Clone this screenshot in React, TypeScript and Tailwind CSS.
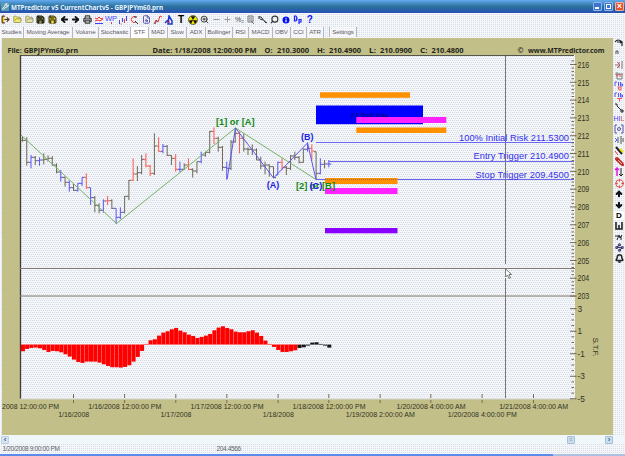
import type { ReactNode } from 'react';
import {
  LogOut, FolderOpen, Save, ArrowLeft, ArrowRight, Printer, Info, Minus, Plus,
  Search, ZoomIn, ArrowUp, ArrowDown, Bell, Crosshair, Pencil, Wrench, Waypoints, FileSearch,
} from 'lucide-react';

const DITHER = 'bg-[#f3f6fa] bg-[conic-gradient(#dadee3_25%,#f3f6fa_0)] bg-[length:2px_2px]';

// [high, low, close, colour] in thirds of a pixel below y = 110
type Bar = [number, number, number, string];
const BARS: Bar[] = [
  [78, 95, 91, 'k'], [82, 167, 157, 'k'], [135, 175, 142, 'b'], [138, 165, 152, 'k'], [142, 167, 150, 'b'],
  [130, 163, 148, 'k'], [136, 155, 145, 'k'], [138, 167, 165, 'k'], [160, 190, 186, 'k'], [180, 215, 202, 'b'],
  [200, 230, 217, 'k'], [212, 245, 233, 'b'], [222, 243, 241, 'k'], [220, 245, 220, 'b'], [202, 228, 202, 'b'],
  [190, 237, 233, 'r'], [233, 285, 263, 'b'], [258, 307, 286, 'k'], [280, 310, 301, 'k'], [268, 308, 273, 'b'],
  [258, 285, 272, 'r'], [268, 297, 295, 'k'], [295, 342, 322, 'b'], [292, 327, 307, 'b'], [258, 310, 259, 'k'],
  [210, 270, 211, 'k'], [145, 213, 192, 'r'], [168, 213, 188, 'k'], [135, 193, 148, 'k'], [130, 172, 168, 'r'],
  [165, 198, 190, 'r'], [70, 195, 108, 'k'], [82, 125, 124, 'r'], [102, 130, 109, 'b'], [105, 138, 136, 'k'],
  [136, 165, 145, 'k'], [132, 185, 178, 'r'], [155, 187, 178, 'b'], [160, 180, 165, 'k'], [145, 180, 178, 'r'],
  [175, 203, 183, 'k'], [155, 190, 155, 'k'], [125, 160, 135, 'b'], [126, 140, 127, 'k'], [63, 130, 64, 'k'],
  [52, 102, 85, 'r'], [80, 125, 112, 'k'], [108, 182, 172, 'k'], [155, 208, 175, 'b'], [90, 180, 96, 'k'],
  [53, 98, 70, 'k'], [65, 130, 85, 'r'], [70, 125, 117, 'k'], [112, 135, 118, 'k'], [103, 135, 120, 'k'],
  [115, 150, 150, 'k'], [140, 178, 168, 'k'], [155, 193, 165, 'k'], [163, 200, 170, 'k'], [170, 205, 203, 'k'],
  [155, 195, 157, 'b'], [145, 180, 172, 'r'], [168, 195, 175, 'k'], [135, 180, 138, 'k'], [125, 150, 142, 'k'],
  [138, 160, 157, 'k'], [115, 158, 118, 'k'], [97, 125, 115, 'b'], [103, 150, 123, 'r'], [125, 208, 190, 'k'],
  [145, 193, 163, 'b'], [150, 175, 162, 'k'], [150, 172, 162, 'b'],
];
const BAR_COLORS: Record<string, string> = { k: '#6e675a', b: '#5a55f5', r: '#fb5b50' };

const STF = [
  -20, -13, -10, -9, -11, -16, -22, -19, -20, -23, -29, -36, -45, -52, -55, -51, -51, -51, -54, -59, -64, -68, -68,
  -69, -67, -62, -51, -37, -19, 2, 13, 16, 27, 36, 40, 46, 50, 42, 37, 30, 26, 20, 23, 27, 32, 43, 51, 55, 50, 46,
  39, 37, 37, 40, 43, 36, 26, 12, 2, -7, -16, -22, -22, -20, -17, -10, -8, -3, 6, 7, 2, -3, -9,
];

const DATES: [string, number, number, number][] = [
  ['1/16/2008', 73.7, 417, 31], ['1/16/2008 12:00:00 PM', 124.8, 409, 73],
  ['1/17/2008', 176, 417, 31], ['1/17/2008 12:00:00 PM', 227, 409, 73],
  ['1/18/2008', 278.3, 417, 31], ['1/18/2008 12:00:00 PM', 329, 409, 73],
  ['1/19/2008 2:00:00 AM', 380.3, 417, 69], ['1/20/2008 4:00:00 AM', 431, 409, 69],
  ['1/20/2008 4:00:00 PM', 482.3, 417, 69], ['1/21/2008 4:00:00 AM', 533.7, 409, 69],
];

const ZONES: [number, number, number, number, string][] = [
  [320, 92.3, 90, 5.5, '#ff9000'],
  [316, 105.5, 107, 18.7, '#0000ff'],
  [356.3, 117, 90, 6, '#ff22ff'],
  [356.3, 127.5, 90, 5.5, '#ff9000'],
  [325, 178, 72.5, 6, '#ff9000'],
  [325, 188, 72.5, 6, '#ff22ff'],
  [325, 228, 72.5, 5.3, '#8800ff'],
];

const HEADINGS: [string, number, number][] = [
  ['File: GBPJPYm60.prn', 7.5, 70.5], ['Date: 1/18/2008 12:00:00 PM', 152.5, 104],
  ['O:', 264.5, 8], ['210.3000', 277, 32], ['H:', 317, 8], ['210.4900', 329, 32],
  ['L:', 369, 7], ['210.0900', 380, 32], ['C:', 420, 7.5], ['210.4800', 431.5, 32],
  ['©', 517.5, 6], ['www.MTPredictor.com', 528, 76.5],
];

const TABS: [string, number][] = [
  ['Studies', 24], ['Moving Average', 49], ['Volume', 26], ['Stochastic', 32], ['STF', 18], ['MAD', 19],
  ['Slow', 19], ['ADX', 19], ['Bollinger', 27], ['RSI', 16], ['MACD', 24], ['OBV', 18], ['CCI', 16], ['ATR', 17],
];

function Glyph({ children, color = '#222' }: { children: ReactNode; color?: string }) {
  return (
    <svg width="10" height="10" viewBox="0 0 10 10" fill="none" stroke={color} strokeWidth="1">
      {children}
    </svg>
  );
}

const TOOLS: ReactNode[] = [
  <LogOut size={9} strokeWidth={3} color="#5a3020" fill="#e8d820" />,
  <FolderOpen size={9} strokeWidth={2} color="#8a8440" fill="#f2ea70" />,
  <FolderOpen size={9} strokeWidth={2} color="#8a8850" fill="#e4e0a8" />,
  <Save size={9} strokeWidth={3.5} color="#24240c" fill="#8a8a60" />,
  <Save size={9} strokeWidth={3.5} color="#4a4515" fill="#ffe040" />,
  <ArrowLeft size={9} strokeWidth={5} color="#111" />,
  <ArrowRight size={9} strokeWidth={5} color="#111" />,
  <Printer size={9} strokeWidth={3} color="#444" fill="#aaa" />,
  <Glyph color="#f03030"><path d="M1 3l2 1 2-2 2 2 2-1M1 6l3-1 2 1 3-2" /><path d="M1 8.500h8" stroke="#4040ff" /></Glyph>,
  <span className="flex flex-col items-center text-[7.5px] leading-[7px] text-[#4444ff]">
    WP
    <span className="h-0.5 w-px bg-[#e04040]" />
  </span>,
  <Glyph color="#4444ee"><path d="M1.500 5v4M4.500 3v4M8.500 1v5" /><path d="M6.500 4v4M3 8.500v1" stroke="#f04040" /></Glyph>,
  <Glyph color="#f03030"><path d="M7 2a3 3 0 1 0 0 5" /><path d="M6 6l3 3M8 2H5" stroke="#333" /></Glyph>,
  <FileSearch size={9} strokeWidth={2.5} color="#574fb0" />,
  <Glyph color="#ee3030"><path d="M1 9l2-4 2 2 2-6 2 1" /><path d="M2 9l2-4" stroke="#555" /></Glyph>,
  <Glyph color="#1838d0"><path d="M1 8l3-3M5 1l3 5v3H4z" strokeWidth="1.500" /><path d="M3 7h3" stroke="#e02020" /></Glyph>,
  <span className="text-[10px] font-bold leading-[10px]">T</span>,
  <Glyph color="none">
    <circle cx="5" cy="5" r="4.500" fill="#f5e600" stroke="#222" strokeWidth=".6" />
    <path d="M5 5L2.700 1.200h4.600zM5 5L.8 5.500l2.200 3.600zM5 5l4.200.5L7 9.100z" fill="#111" />
  </Glyph>,
  <ZoomIn size={9} strokeWidth={2.5} color="#333" />,
  <Minus size={9} strokeWidth={2.5} color="#999" />,
  <Plus size={9} strokeWidth={2.5} color="#999" />,
  <span className="text-[7px] leading-[9px] text-[#444]">%₂</span>,
  <Glyph color="#777"><path d="M2 1h5v6H2zM3 3h3M3 5h3M5 6l3 3" /></Glyph>,
  <Glyph color="#333"><path d="M1 2h2l5 6M2 4l3 1M6 6l3 2M1 1v3" /></Glyph>,
  <Search size={9} strokeWidth={3} color="#333" className="-scale-x-100" />,
  <Info size={10} strokeWidth={3} color="#fff" fill="#0010ee" />,
  <Glyph color="#2020ff"><path d="M1.500 1v5H3q2-2.500 0-5zM6 9V4.500h2v2.500H6" strokeWidth="1.200" /></Glyph>,
  <span className="text-[10px] font-bold leading-[9px] text-[#1010ff]">?</span>,
];

const SIDE: ReactNode[] = [
  <Glyph><path d="M1 4q3-4 7 0l-2 1M3 4h5v4" strokeWidth="1.200" /></Glyph>,
  <Glyph color="#555"><path d="M2 5V2h2v3" /></Glyph>,
  <Glyph color="#777"><path d="M1 5h3M8 1v8M5 2v6" /><path d="M3 2l3 3-3 3" stroke="#f05050" /></Glyph>,
  <Glyph color="#777"><path d="M1 3h8M3 1v7h5V3" /><path d="M2 5l4-2v3" stroke="#e05050" /></Glyph>,
  <Glyph color="#5555ff"><path d="M1 5V1h2M4.500 1v4M6.500 1v4h2V3h-2" /><path d="M4 6h3v3H5z" stroke="#f05050" /></Glyph>,
  <Glyph color="#5555ff"><path d="M1 5V1h2M4.500 1v4M6.500 1v4h2V3h-2" /><path d="M3 6.500h5M5.500 6v3.500" stroke="#f05050" /></Glyph>,
  <Glyph><path d="M1 1h2v2l4 4h2v2H7V7" /></Glyph>,
  <span className="text-[7px] leading-[8px] text-[#4444ff]">HI<span className="text-[#f04040]">L</span></span>,
  <Glyph color="#5555aa"><path d="M3 1H1v8h2M7 1h2v8H7" /><circle cx="5" cy="5" r="1.500" /></Glyph>,
  <Glyph color="#555"><path d="M4 2v6M7 1v8M9 3v4" /><path d="M1 3l2 2-2 2" stroke="#5555ff" /></Glyph>,
  <Glyph color="#222"><path d="M2 1l6 7" strokeWidth="2" /><path d="M6 3l3 3" stroke="#eee000" strokeWidth="2" /><path d="M1 5l3 4" stroke="#f03030" /></Glyph>,
  <Pencil size={9} strokeWidth={4} color="#c02020" className="-scale-x-100" />,
  <Glyph color="#222"><path d="M7 1v8M5 7l2 2 2-2" /><path d="M3 9V1M1 3l2-2 2 2" stroke="#e020e0" strokeWidth="1.500" /></Glyph>,
  <Crosshair size={9} strokeWidth={2.5} color="#e04030" />,
  <ArrowUp size={8} strokeWidth={6} color="#111" />,
  <ArrowDown size={8} strokeWidth={6} color="#111" />,
  <span className="bg-white px-0.5 text-[8px] font-bold leading-[9px]">D</span>,
  <Glyph><path d="M2 1v7h6V1M5 4v4" strokeWidth="1.600" /></Glyph>,
  <Glyph><path d="M1 4h3M3 8l2-5 1 3 2-3M7 4v4" /></Glyph>,
  <Waypoints size={9} strokeWidth={3} color="#403a70" />,
  <Bell size={9} strokeWidth={4} color="#222" />,
];

function Axis() {
  const priceTicks = Array.from({ length: 67 }, (_, i) => 60.9 + i * 3.563);
  const stfTicks = Array.from({ length: 17 }, (_, i) => 308.7 + i * 5.63);
  return (
    <g fontSize="8.300" fill="#333323">
      {priceTicks.filter((y) => y < 297).map((y, i) => (
        <path key={i} d={`M${i % 5 === 1 ? 570 : 571.5} ${y}H${i % 5 === 1 ? 576.5 : 574}`} stroke="#66563c" strokeWidth=".9" />
      ))}
      {stfTicks.map((y, i) => (
        <path key={i} d={`M${i % 4 === 0 ? 570 : 571.5} ${y}H${i % 4 === 0 ? 576.5 : 574}`} stroke="#66563c" strokeWidth=".9" />
      ))}
      {Array.from({ length: 14 }, (_, i) => (
        <text key={i} x="577.5" y={67.7 + i * 17.8} textLength="11.8" lengthAdjust="spacingAndGlyphs">{216 - i}</text>
      ))}
      {[3, 1, -1, -3, -5].map((v, i) => (
        <text key={v} x="577.5" y={311.7 + i * 22.5}>{v}</text>
      ))}
      <text transform="translate(592.5 337.5) rotate(90)" fontSize="8" textLength="19">S.T.F.</text>
    </g>
  );
}

function Chart() {
  return (
    <svg className="block h-[397px] w-[611px] shrink-0" viewBox="2 38 611 397" fontFamily="Liberation Sans, Arial, sans-serif">
      <defs>
        <pattern id="dots" width="4" height="4" patternUnits="userSpaceOnUse">
          <rect width="4" height="4" fill="#f3f6fa" />
          <path d="M0 0h1v1h-1zM2 0h1v1h-1zM1 2h1v1h-1zM3 2h1v1h-1z" fill="#d6dade" />
        </pattern>
        <pattern id="specks" width="23" height="19" patternUnits="userSpaceOnUse">
          <rect width="23" height="19" fill="#c2bf89" />
          <path d="M3 4h1v1h-1zM15 12h1v1h-1z" fill="#a9bf9c" />
          <path d="M9 16h1v1h-1zM19 2h1v1h-1z" fill="#bdb3a0" />
        </pattern>
      </defs>
      <rect x="2" y="38" width="611" height="397" fill="url(#specks)" />
      <rect x="20" y="55" width="555" height="344" fill="url(#dots)" />
      <path d="M20 55.500H574" stroke="#55564b" />
      <path d="M20.500 55V399" stroke="#3c3c3c" strokeWidth="1.300" />
      <path d="M20 399H575" stroke="#d5d5d0" />

      <g fontFamily="Noto Sans, sans-serif" fontWeight="bold" fontSize="7.300" fill="#25251a">
        {HEADINGS.map(([label, x, width]) => (
          <text key={x} x={x} y="52.500" textLength={width} lengthAdjust="spacingAndGlyphs">{label}</text>
        ))}
      </g>

      {/* crosshair and pane divider */}
      <path d="M20 268.500H575M20 296H575" stroke="#80796f" />
      <path d="M505.500 56V264M505.500 278V398" stroke="#77736f" />

      {BARS.map(([high, low, close, color], i) => {
        const x = 22.5 + i * 4.255;
        const open = i === 0 ? close : BARS[i - 1][2];
        const openY = Math.min(Math.max(open, high), low);
        return (
          <path
            key={i}
            d={`M${x} ${110 + high / 3}V${110 + low / 3}M${x - 2} ${110 + openY / 3}H${x}M${x} ${110 + close / 3}h2.500`}
            stroke={BAR_COLORS[color]}
            fill="none"
          />
        );
      })}

      <path d="M21 135L116.500 223.500L235.500 128L316 179.500" fill="none" stroke="#77b366" />
      <path d="M227 179.500L235.500 128L273.500 178L307.500 143L316 179.500" fill="none" stroke="#5b55e8" />

      <path d="M316 142.500H574M329 161.500H574M316 179.500H574" stroke="#6a66f0" />
      {ZONES.map(([x, y, w, h, fill]) => (
        <rect key={`${x}-${y}`} x={x} y={y} width={w} height={h} fill={fill} />
      ))}
      <text x="351" y="116.500" fontSize="5" fill="#050540" textLength="37">2-2 Profit Area</text>
      <path d="M325 179.500H397" stroke="#a56a38" strokeDasharray="1 1" />

      <g fontSize="9.300" fill="#3530ee">
        <text x="459" y="140.500" textLength="110">100% Initial Risk 211.5300</text>
        <text x="473.500" y="159.200" textLength="95.500">Entry Trigger 210.4900</text>
        <text x="475.500" y="177.700" textLength="93.500">Stop Trigger 209.4500</text>
      </g>
      <g fontSize="9.500" fontWeight="bold" fill="#118811">
        <text x="216" y="125" textLength="38.500" lengthAdjust="spacingAndGlyphs">[1] or [A]</text>
        <text x="296" y="189" textLength="39" lengthAdjust="spacingAndGlyphs">[2] or [B]</text>
      </g>
      <g fontSize="9.500" fontWeight="bold" fill="#2020e8">
        <text x="301" y="139.500" textLength="12.500" lengthAdjust="spacingAndGlyphs">(B)</text>
        <text x="266.800" y="188.300" textLength="12.500" lengthAdjust="spacingAndGlyphs">(A)</text>
        <text x="309.500" y="189" textLength="13" lengthAdjust="spacingAndGlyphs">(C)</text>
      </g>

      {STF.map((v, i) => (
        <rect
          key={i}
          x={20.9 + i * 4.255}
          y={v > 0 ? 344.6 - v / 3 : 344.6}
          width="4.050"
          height={Math.abs(v) / 3}
          fill={i < 65 ? '#ff0000' : '#151515'}
        />
      ))}
      <path d="M21 344.500H300" stroke="#ff7777" strokeWidth=".7" />

      <Axis />
      <g fontSize="8.100" fill="#333323">
        <text x="2" y="409" textLength="57" lengthAdjust="spacingAndGlyphs">2008 12:00:00 PM</text>
        {DATES.map(([label, x, y, width]) => (
          <g key={label}>
            <path d={`M${x - 0.2} 394V398M${x - 0.2} 400V403`} stroke="#786c50" />
            <text x={x - width / 2} y={y + 0.2} textLength={width} lengthAdjust="spacingAndGlyphs">{label}</text>
          </g>
        ))}
      </g>
      <path d="M505.500 269v8l2-2 1.500 3.500 1.500-.7-1.500-3.300h2.700z" fill="white" stroke="#5a5a5a" strokeWidth=".8" />
    </svg>
  );
}

export default function App() {
  return (
    <div className={`flex h-[456px] w-[625px] flex-col overflow-hidden font-['Liberation_Sans',Arial,sans-serif] text-black ${DITHER}`}>
      <header className="flex h-[13px] shrink-0 items-center bg-linear-to-b from-[#63aaf0] via-[#2b719c] to-[#2850b4] pl-px pr-px">
        <span className="flex size-2 items-center justify-center bg-[#5b9ab0]">
          <Wrench size={7} color="#fff" strokeWidth={3} />
        </span>
        <svg width="154" height="12" className="ml-0.5">
          <text x="0" y="9" fill="#e8f3ff" fontFamily="Noto Sans, sans-serif" fontWeight="bold" fontSize="7.300" textLength="152" lengthAdjust="spacingAndGlyphs">
            MTPredictor v5 CurrentChartv5 - GBPJPYm60.prn
          </text>
        </svg>
        <div className="ml-auto flex gap-[2px]">
          <span className="flex h-[9px] w-[9px] items-end rounded-[1px] border border-[#8fb8ee] bg-[#3a73d0] p-px">
            <span className="h-[2px] w-1 bg-white" />
          </span>
          <span className="flex h-[9px] w-[9px] items-center justify-center rounded-[1px] border border-[#8fb8ee] bg-[#3a73d0]">
            <span className="size-[5px] border border-white" />
          </span>
          <span className="flex h-[9px] w-[9px] items-center justify-center rounded-[1px] border border-[#f0b0a0] bg-[#e2532f] text-[9px] font-bold text-white">
            ×
          </span>
        </div>
      </header>

      <div className="flex h-[13px] shrink-0 items-center">
        {TOOLS.map((tool, i) => (
          <span key={i} className="flex h-3 w-[11.7px] shrink-0 items-center justify-center">{tool}</span>
        ))}
      </div>

      <div className="flex h-3 shrink-0 items-center text-[6.2px] tracking-[-0.1px] text-[#5e5a66]">
        {TABS.map(([name, width]) => (
          <span
            key={name}
            style={{ width }}
            className={`flex h-[11px] shrink-0 items-center justify-center whitespace-nowrap border-r border-[#b9b6c4] ${name === 'STF' ? 'bg-white' : 'bg-white/40'}`}
          >
            {name}
          </span>
        ))}
        <span className="ml-[5px] flex h-[10px] w-[28px] items-center justify-center border-l border-r border-[#b9b6c4] bg-white/40">Settings</span>
      </div>

      <div className="flex h-[397px] shrink-0 pl-[2px]">
        <Chart />
        <aside className="flex w-[12px] shrink-0 flex-col items-center">
          {SIDE.map((icon, i) => (
            <span key={i} className="flex h-[10.75px] w-[11px] shrink-0 items-center justify-center">{icon}</span>
          ))}
        </aside>
      </div>

      <div className="flex h-[9px] shrink-0 items-center bg-[#f0f7fb] pl-px pr-[12px]">
        <span className="flex h-2 w-2 items-center justify-center rounded-[1px] border border-[#bfd0df] bg-[#d4e4f0] text-[8px] font-bold leading-none text-[#405c88]">‹</span>
        <span className="ml-auto mr-[30px] flex h-2 w-2 items-center justify-center rounded-[1px] border border-[#a9c0d4] bg-[#c9dff0] text-[5px] text-[#7c9ab8]">≡</span>
        <span className="flex h-2 w-2 items-center justify-center rounded-[1px] border border-[#a9c0d4] bg-[#c9dff0] text-[8px] font-bold leading-none text-[#405c88]">›</span>
      </div>

      <footer className="flex h-[10px] shrink-0 items-center text-[6.500px] tracking-[-0.35px] text-[#5f5f6a]">
        <span className="w-[214px] pl-[2.5px]">1/20/2008 9:00:00 PM</span>
        <span className="pl-[2.5px]">204.4566</span>
      </footer>
      <div className="flex h-[2px] shrink-0">
        <span className="w-[553px] bg-[#5b8be8]" />
        <span className="grow bg-[#aebfe0]" />
      </div>
    </div>
  );
}
